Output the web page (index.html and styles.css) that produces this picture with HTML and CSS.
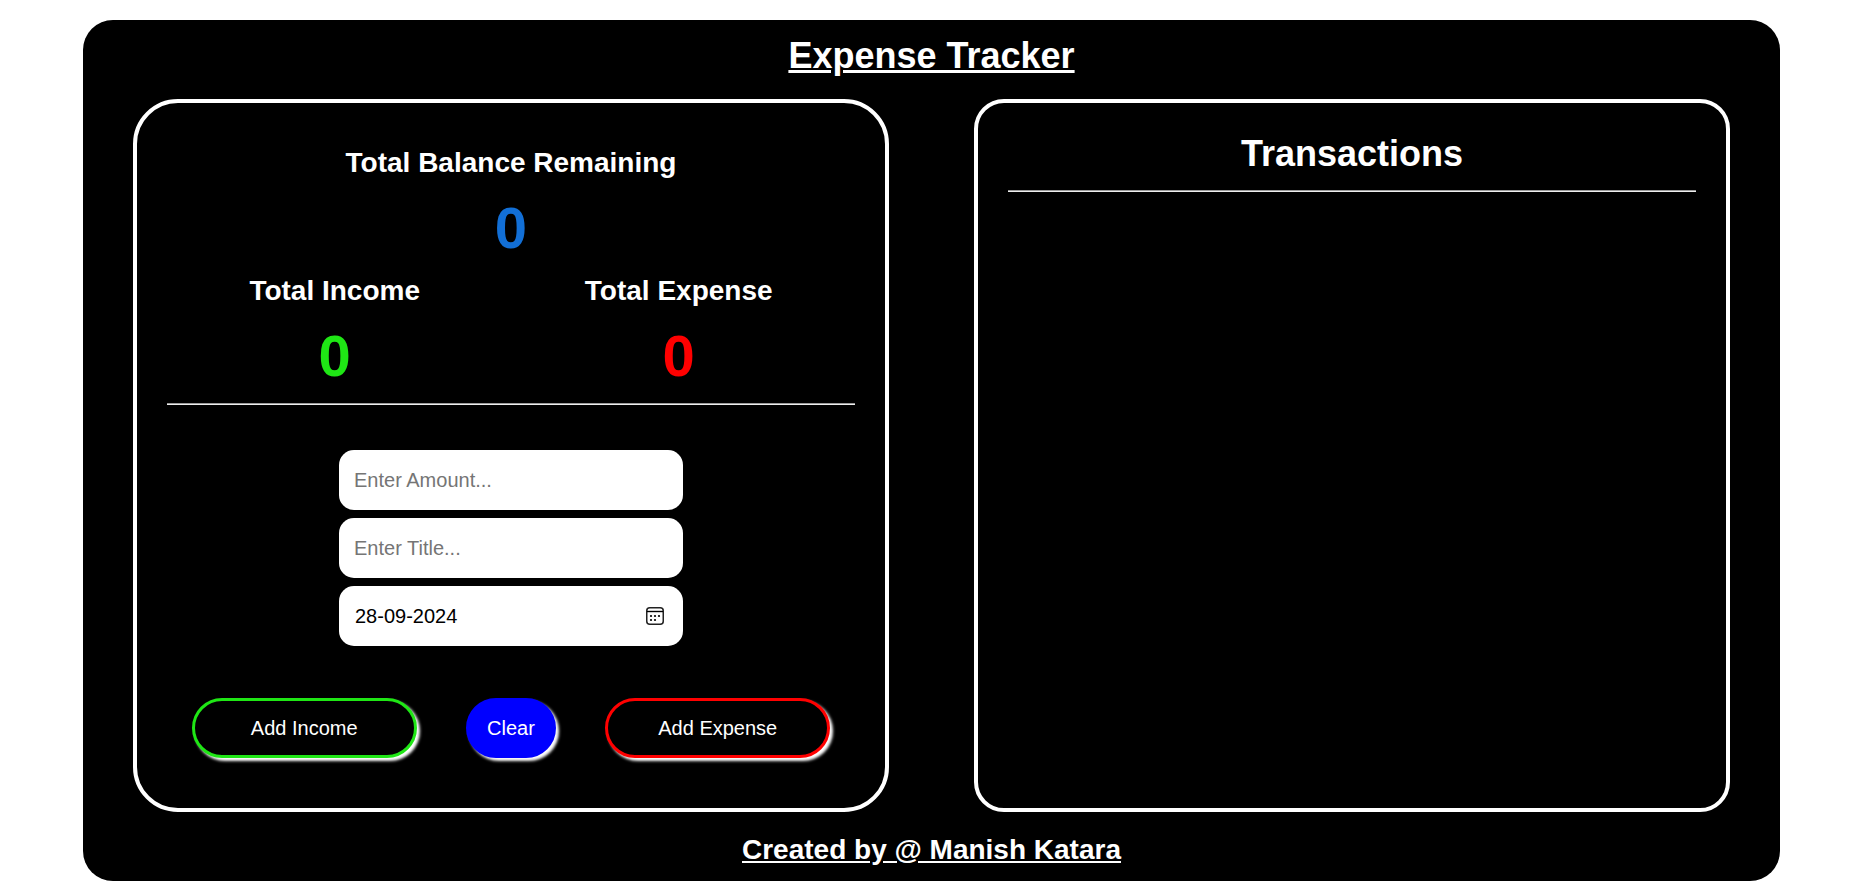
FILE: index.html
```html
<!DOCTYPE html>
<html lang="en">
<head>
<meta charset="utf-8">
<meta name="viewport" content="width=device-width, initial-scale=1">
<title>Expense Tracker</title>
<link rel="stylesheet" href="styles.css">
</head>
<body>
<div class="container">
  <h1 class="title">Expense Tracker</h1>
  <main class="panels">
    <section class="panel panel-entry">
      <div class="summary">
        <div class="stat">
          <h2 class="stat-label">Total Balance Remaining</h2>
          <div class="stat-value balance">0</div>
        </div>
        <div class="summary-row">
          <div class="stat">
            <h2 class="stat-label">Total Income</h2>
            <div class="stat-value income">0</div>
          </div>
          <div class="stat">
            <h2 class="stat-label">Total Expense</h2>
            <div class="stat-value expense">0</div>
          </div>
        </div>
      </div>
      <hr class="rule">
      <form class="entry">
        <div class="fields">
          <input class="field" type="text" placeholder="Enter Amount..." aria-label="Amount">
          <input class="field" type="text" placeholder="Enter Title..." aria-label="Title">
          <div class="date-field">
            <input class="date-input" type="text" value="28-09-2024" aria-label="Date">
            <button class="date-button" type="button" aria-label="Show date picker">
              <svg width="18" height="18" viewBox="0 0 18 18" aria-hidden="true">
                <rect x="0.75" y="0.75" width="16.5" height="16.5" rx="3" fill="none" stroke="#222" stroke-width="1.5"/>
                <path d="M1 4.5H17" stroke="#000" stroke-width="1.4"/>
                <g fill="#000"><circle cx="5" cy="9" r="1.1"/><circle cx="9" cy="9" r="1.1"/><circle cx="13" cy="9" r="1.1"/><circle cx="5" cy="13" r="1.1"/><circle cx="9" cy="13" r="1.1"/></g>
              </svg>
            </button>
          </div>
        </div>
        <div class="actions">
          <button class="btn btn-income" type="button">Add Income</button>
          <button class="btn btn-clear" type="button">Clear</button>
          <button class="btn btn-expense" type="button">Add Expense</button>
        </div>
      </form>
    </section>
    <section class="panel panel-list">
      <h1 class="list-title">Transactions</h1>
      <hr class="rule">
    </section>
  </main>
  <h2 class="credit">Created by @ Manish Katara</h2>
</div>
</body>
</html>
```
FILE: styles.css
```css
* {
  box-sizing: border-box;
  margin: 0;
}

body {
  background: #fff;
  color: #fff;
  font-family: "Liberation Sans", Arial, sans-serif;
}

.container {
  display: flex;
  flex-direction: column;
  gap: 22px;
  margin: 20px 79px 5px 83px;
  padding: 15px 50px;
  border-radius: 30px;
  background: #000;
}

.title,
.credit {
  text-align: center;
  text-decoration: underline;
}

.title,
.list-title {
  font-size: 36px;
  line-height: 42px;
}

.credit,
.stat-label {
  font-size: 28px;
  line-height: 32px;
}

.panels {
  display: grid;
  grid-template-columns: 1fr 1fr;
  gap: 85px;
}

.panel {
  padding: 30px;
  border: 4px solid #fff;
}

.panel-entry {
  border-radius: 45px;
}

.panel-list {
  border-radius: 30px;
}

.list-title {
  margin-bottom: 15px;
  text-align: center;
}

.rule {
  border: 0;
  border-top: 1px solid #9a9a9a;
  border-bottom: 1px solid #eee;
}

.summary {
  padding-top: 14px;
}

.summary-row {
  display: flex;
  justify-content: space-around;
}

.stat {
  text-align: center;
}

.stat-value {
  padding: 17px 0 15px;
  font-size: 58px;
  font-weight: 700;
  line-height: 64px;
}

.balance {
  color: #126fd6;
}

.income {
  color: #1fe615;
}

.expense {
  color: #f00;
}

.entry {
  padding: 45px 0 20px;
}

.fields {
  display: flex;
  flex-direction: column;
  gap: 8px;
  width: 50%;
  margin: 0 auto 52px;
}

.field,
.date-field {
  width: 100%;
  height: 60px;
  padding: 0 15px;
  border: 0;
  border-radius: 15px;
  background: #fff;
  color: #000;
  font-family: inherit;
  font-size: 20px;
}

.field::placeholder {
  color: #757575;
}

.date-field {
  display: flex;
  align-items: center;
  padding: 0 19px 0 16px;
}

.date-input {
  flex: 1;
  min-width: 0;
  padding: 0;
  border: 0;
  color: inherit;
  font: inherit;
}

.date-button {
  display: flex;
  padding: 0;
  border: 0;
  background: none;
}

.actions {
  display: flex;
  justify-content: space-around;
}

.btn {
  height: 60px;
  padding: 0 18px;
  border: 3px solid;
  border-radius: 30px;
  background: #000;
  box-shadow: 3px 3px 3px #fff;
  color: #fff;
  font-family: inherit;
  font-size: 20px;
}

.btn-income {
  width: 225px;
  border-color: #1fe615;
}

.btn-expense {
  width: 225px;
  border-color: #f00;
}

.btn-clear {
  border-color: #00f;
  background: #00f;
}
```
